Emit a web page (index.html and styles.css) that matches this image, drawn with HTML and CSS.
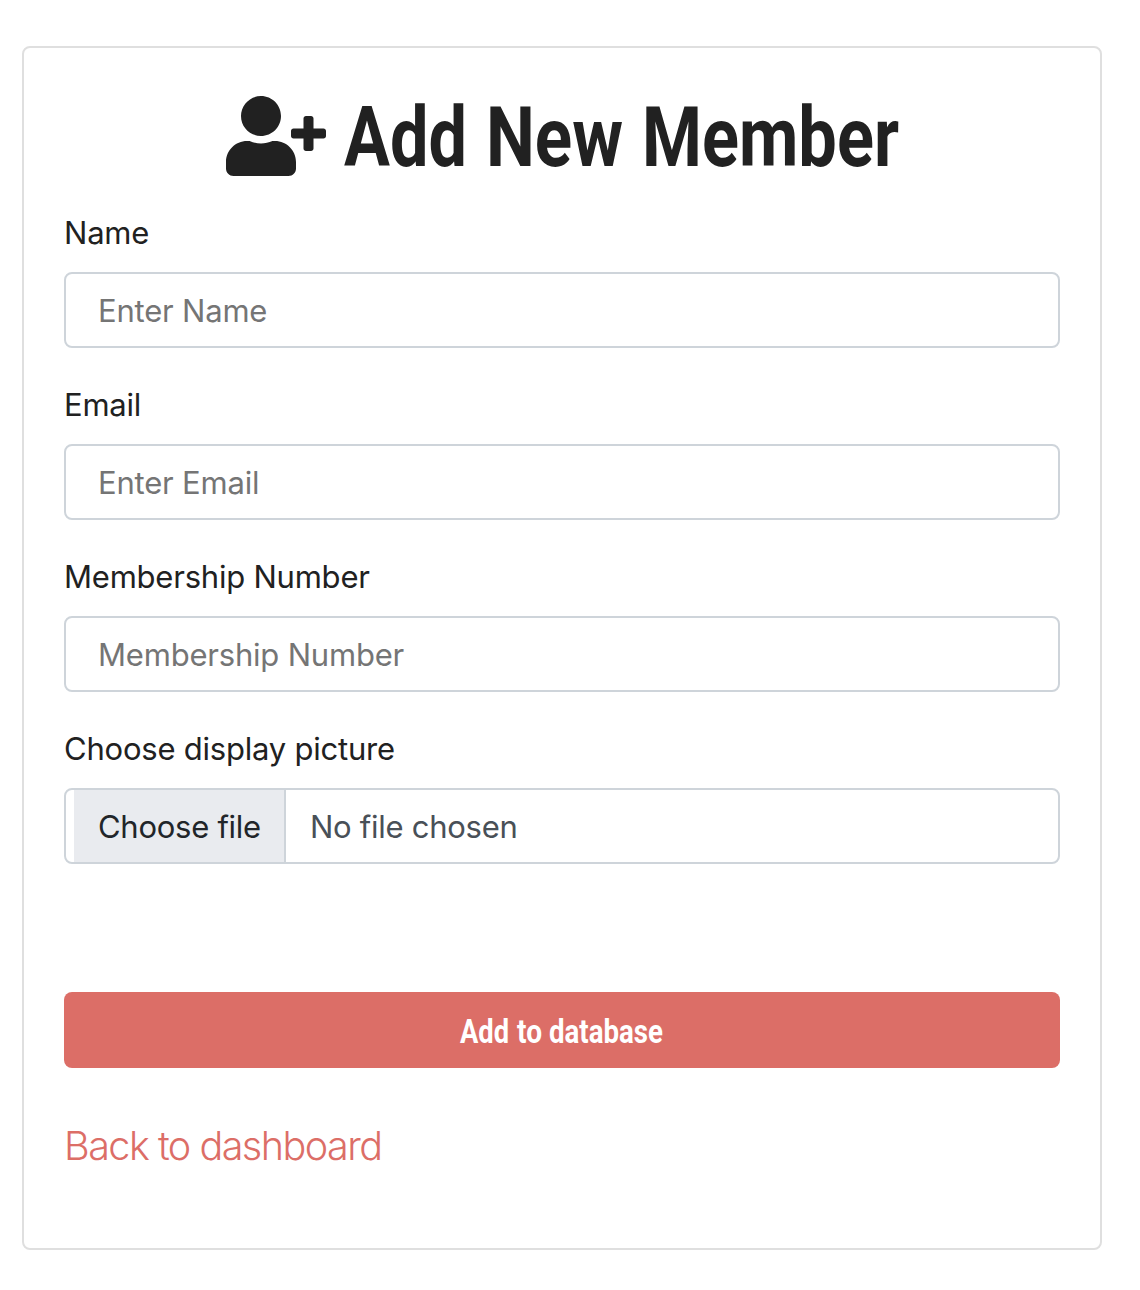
FILE: index.html
```html
<!DOCTYPE html>
<html lang="en">
<head>
<meta charset="utf-8">
<title>Add New Member</title>
<link rel="stylesheet" href="styles.css">
</head>
<body>
<main class="card">
  <h1 class="title">
    <svg class="title-icon" viewBox="0 0 640 512" aria-hidden="true"><path fill="currentColor" d="M624 208h-64v-64c0-8.800-7.200-16-16-16h-32c-8.800 0-16 7.200-16 16v64h-64c-8.800 0-16 7.200-16 16v32c0 8.800 7.200 16 16 16h64v64c0 8.800 7.200 16 16 16h32c8.800 0 16-7.200 16-16v-64h64c8.800 0 16-7.200 16-16v-32c0-8.800-7.200-16-16-16zm-400 48c70.700 0 128-57.300 128-128S294.700 0 224 0 96 57.300 96 128s57.300 128 128 128zm89.600 32h-16.700c-22.200 10.200-46.900 16-72.900 16s-50.600-5.800-72.900-16h-16.700C60.200 288 0 348.200 0 422.400V464c0 26.500 21.500 48 48 48h352c26.500 0 48-21.500 48-48v-41.600c0-74.200-60.200-134.400-134.400-134.400z"/></svg>
    <svg class="title-text" viewBox="0 0 554 80">
      <text x="0" y="70" textLength="123" lengthAdjust="spacingAndGlyphs">Add</text>
      <text x="142" y="70" textLength="137" lengthAdjust="spacingAndGlyphs">New</text>
      <text x="298" y="70" textLength="257" lengthAdjust="spacingAndGlyphs">Member</text>
    </svg>
  </h1>
  <form class="form">
    <div class="field">
      <label class="label" for="name">Name</label>
      <input class="input" id="name" type="text" placeholder="Enter Name">
    </div>
    <div class="field">
      <label class="label" for="email">Email</label>
      <input class="input" id="email" type="email" placeholder="Enter Email">
    </div>
    <div class="field">
      <label class="label" for="number">Membership Number</label>
      <input class="input" id="number" type="text" placeholder="Membership Number">
    </div>
    <div class="field">
      <span class="label">Choose display picture</span>
      <div class="file">
        <span class="file-button">Choose file</span>
        <span class="file-name">No file chosen</span>
      </div>
    </div>
    <button class="submit" type="button">
      <svg class="submit-text" viewBox="0 0 204 60">
        <text x="0" y="43" textLength="49" lengthAdjust="spacingAndGlyphs">Add</text>
        <text x="57" y="43" textLength="25" lengthAdjust="spacingAndGlyphs">to</text>
        <text x="89" y="43" textLength="114" lengthAdjust="spacingAndGlyphs">database</text>
      </svg>
    </button>
  </form>
  <a class="back">Back to dashboard</a>
</main>
</body>
</html>
```
FILE: styles.css
```css
* { box-sizing: border-box; }
body {
  margin: 0;
  padding: 46px 38px 40px 22px;
  background: #fff;
  color: #212121;
  font-family: Inter, "Liberation Sans", sans-serif;
}
.card {
  height: 1204px;
  padding: 48px 40px;
  border: 2px solid #dfdfdf;
  border-radius: 8px;
}
.title {
  display: flex;
  justify-content: center;
  gap: 18px;
  height: 80px;
  margin: 0 0 32px;
}
.title-icon { width: 100px; height: 80px; }
.title-text {
  width: 554px;
  height: 80px;
  overflow: visible;
  fill: currentColor;
  font: 700 83px Roboto, sans-serif;
}
.form { display: flex; flex-direction: column; }
.field {
  display: flex;
  flex-direction: column;
  gap: 16px;
  margin-bottom: 32px;
}
.label {
  height: 48px;
  font-size: 31px;
  line-height: 50px;
  letter-spacing: -0.22px;
}
.input, .file {
  width: 100%;
  height: 76px;
  border: 2px solid #ced4da;
  border-radius: 8px;
  background: #fff;
  font: 400 31px/48px Inter, "Liberation Sans", sans-serif;
  letter-spacing: -0.2px;
}
.input { padding: 0 32px; }
.input::placeholder { color: #757575; opacity: 1; }
.file {
  display: flex;
  align-items: stretch;
  padding-left: 8px;
  line-height: 74px;
  letter-spacing: -0.27px;
}
.file-button {
  width: 212px;
  height: 72px;
  padding-left: 24px;
  border-right: 2px solid #ced4da;
  background: #e9ebef;
  color: #212529;
}
.file-name { height: 72px; padding-left: 24px; color: #495057; }
.submit {
  display: flex;
  align-items: center;
  justify-content: center;
  height: 76px;
  margin: 96px 0 0;
  padding: 0;
  border: 0;
  border-radius: 8px;
  background: #dc6e67;
  color: #fff;
}
.submit-text {
  width: 204px;
  height: 60px;
  overflow: visible;
  fill: currentColor;
  font: 700 33px Roboto, sans-serif;
}
.back {
  display: block;
  margin-top: 48px;
  color: #dc6e67;
  font-size: 39.5px;
  font-weight: 300;
  line-height: 60px;
  letter-spacing: -1.5px;
}
```
